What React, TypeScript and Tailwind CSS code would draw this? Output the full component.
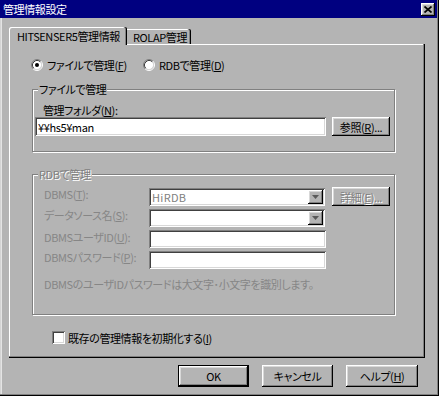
import React from "react";

const RAISED =
  "shadow-[inset_-1px_-1px_0_#000,inset_1px_1px_0_#fff,inset_-2px_-2px_0_#808080,inset_2px_2px_0_#d8d8d8]";
const SUNKEN =
  "shadow-[inset_1px_1px_0_#808080,inset_-1px_-1px_0_#fff,inset_2px_2px_0_#404040,inset_-2px_-2px_0_#d8d8d8]";

function Radio({ checked }: { checked?: boolean }) {
  return (
    <svg width="12" height="12" viewBox="0 0 12 12" className="shrink-0">
      <circle cx="6" cy="6" r="4.5" fill="#fff" />
      <path d="M2.11 9.89 A5.5 5.5 0 0 1 9.89 2.11" stroke="#808080" strokeWidth="1" fill="none" />
      <path d="M9.89 2.11 A5.5 5.5 0 0 1 2.11 9.89" stroke="#fff" strokeWidth="1" fill="none" />
      <path d="M2.82 9.18 A4.5 4.5 0 0 1 9.18 2.82" stroke="#404040" strokeWidth="1" fill="none" />
      <path d="M9.18 2.82 A4.5 4.5 0 0 1 2.82 9.18" stroke="#d8d8d8" strokeWidth="1" fill="none" />
      {checked && <circle cx="6" cy="6" r="2" fill="#000" />}
    </svg>
  );
}

function Arrow() {
  return (
    <div className={`w-[15px] h-[14px] bg-[#b4b4b4] flex items-center justify-center ${RAISED}`}>
      <svg width="7" height="4" viewBox="0 0 7 4">
        <path d="M0 0 H7 L3.5 4 Z" fill="#5a5a5a" />
      </svg>
    </div>
  );
}

function Combo({ value }: { value?: string }) {
  return (
    <div className={`w-[176px] h-[18px] bg-white flex items-center p-[2px] ${SUNKEN}`}>
      <div className="flex-1 pl-[1px] text-[#808080] tracking-[0.3px]">{value}</div>
      <Arrow />
    </div>
  );
}

function TextBox({ w, h, value }: { w: string; h: string; value?: string }) {
  return (
    <div className={`${w} ${h} bg-white flex items-center px-[3px] ${SUNKEN}`}>{value}</div>
  );
}

export default function App() {
  return (
    <div className="w-[439px] h-[396px] overflow-hidden bg-[#b4b4b4] flex flex-col shadow-[inset_-1px_-1px_0_#000,inset_-2px_-2px_0_#808080,inset_1px_1px_0_#d4d4d4,inset_2px_2px_0_#e4e4e4] font-['Noto_Sans_CJK_JP',sans-serif] text-[11px] leading-[12px] tracking-[-0.4px] text-black [font-feature-settings:'palt']">
      {/* title bar */}
      <div className="h-[18px] mr-[2px] bg-[#000080] flex items-center justify-between pl-[3px] pr-[2px]">
        <span className="text-white text-[11px] leading-[12px]">管理情報設定</span>
        <div className={`w-[14px] h-[13px] bg-[#b4b4b4] flex items-center justify-center ${RAISED}`}>
          <svg width="8" height="7" viewBox="0 0 8 7">
            <path d="M0.5 0.5 L7.5 6.5 M7.5 0.5 L0.5 6.5" stroke="#000" strokeWidth="1.7" />
          </svg>
        </div>
      </div>

      <div className="pl-[9px] pt-[9px] flex flex-col">
        {/* tabs */}
        <div className="h-[17px] flex items-end">
          <div className="relative z-10 -mb-[1px] w-[118px] h-[18px] bg-[#b4b4b4] pl-[8px] pt-[3px] shadow-[inset_-1px_0_0_#000,inset_-2px_0_0_#808080,inset_1px_1px_0_#fff] rounded-tl-[2px] rounded-tr-[2px]">
            HITSENSER5管理情報
          </div>
          <div className="w-[64px] h-[15px] pl-[6px] pt-[2px] shadow-[inset_-1px_0_0_#000,inset_-2px_0_0_#808080,inset_0_1px_0_#fff] rounded-tr-[2px]">
            ROLAP管理
          </div>
        </div>

        {/* panel */}
        <div className="w-[416px] h-[314px] flex flex-col shadow-[inset_-1px_-1px_0_#000,inset_-2px_-2px_0_#808080,inset_1px_1px_0_#fff]">
          {/* radios */}
          <div className="mt-[15px] pl-[22px] flex items-center h-[12px]">
            <div className="w-[112px] flex items-center gap-[4px]">
              <Radio checked />
              <span>
                ファイルで管理(<u>F</u>)
              </span>
            </div>
            <div className="flex items-center gap-[4px]">
              <Radio />
              <span>
                RDBで管理(<u>D</u>)
              </span>
            </div>
          </div>

          {/* group 1 */}
          <div className="relative mt-[18px] ml-[23px] w-[363px] h-[63px] border border-[#808080] shadow-[1px_1px_0_#fff,inset_1px_1px_0_#fff] flex flex-col">
            <span className="absolute left-[5px] -top-[7px] px-[1px] bg-[#b4b4b4]">ファイルで管理</span>
            <div className="mt-[14px] ml-[10px]">
              管理フォルダ(<u>N</u>):
            </div>
            <div className="mt-[1px] ml-[2px] flex items-center">
              <TextBox w="w-[291px]" h="h-[19px]" value="¥¥hs5¥man" />
              <div className={`ml-[6px] w-[58px] h-[19px] flex items-center justify-center ${RAISED}`}>
                参照(<u>R</u>)...
              </div>
            </div>
          </div>

          {/* group 2 */}
          <div className="relative mt-[22px] ml-[23px] w-[363px] h-[141px] border border-[#808080] shadow-[1px_1px_0_#fff,inset_1px_1px_0_#fff] flex flex-col text-[#868686]">
            <span className="absolute left-[5px] -top-[7px] px-[1px] bg-[#b4b4b4] text-[#808080] [text-shadow:1px_1px_0_#fff]">
              RDBで管理
            </span>
            <div className="mt-[13px] flex flex-col gap-[3px]">
              <div className="h-[18px] flex items-start">
                <div className="ml-[11px] w-[105px]">
                  DBMS(<u>T</u>):
                </div>
                <Combo value="HiRDB" />
                <div
                  className={`ml-[7px] -mt-[1px] w-[58px] h-[19px] flex items-center justify-center text-[#808080] [text-shadow:1px_1px_0_#fff] ${RAISED}`}
                >
                  詳細(<u>E</u>)...
                </div>
              </div>
              <div className="h-[18px] flex items-start">
                <div className="ml-[11px] w-[105px]">
                  データソース名(<u>S</u>):
                </div>
                <Combo />
              </div>
              <div className="h-[18px] flex items-start">
                <div className="ml-[11px] w-[105px] pt-[1px]">
                  DBMSユーザID(<u>U</u>):
                </div>
                <TextBox w="w-[177px]" h="h-[18px]" />
              </div>
              <div className="h-[18px] flex items-start">
                <div className="ml-[11px] w-[105px]">
                  DBMSパスワード(<u>P</u>):
                </div>
                <TextBox w="w-[177px]" h="h-[18px]" />
              </div>
            </div>
            <div className="mt-[9px] ml-[11px]">DBMSのユーザIDパスワードは大文字･小文字を識別します。</div>
          </div>

          {/* checkbox */}
          <div className="mt-[16px] ml-[43px] flex items-center gap-[3px]">
            <div className={`w-[13px] h-[13px] bg-white ${SUNKEN}`} />
            <span>
              既存の管理情報を初期化する(<u>I</u>)
            </span>
          </div>
        </div>
      </div>

      {/* buttons */}
      <div className="mt-[7px] pl-[178px] flex gap-[13px]">
        <div className={`w-[71px] h-[22px] border border-black flex items-center justify-center ${RAISED}`}>OK</div>
        <div className={`w-[71px] h-[22px] flex items-center justify-center ${RAISED}`}>キャンセル</div>
        <div className={`w-[72px] h-[22px] flex items-center justify-center ${RAISED}`}>
          ヘルプ(<u>H</u>)
        </div>
      </div>
    </div>
  );
}
